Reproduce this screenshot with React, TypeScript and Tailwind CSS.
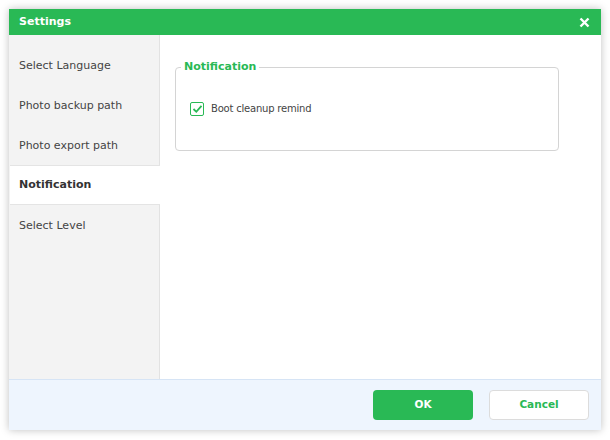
import React from "react";

const items = [
  "Select Language",
  "Photo backup path",
  "Photo export path",
  "Notification",
  "Select Level",
];

export default function App() {
  return (
    <div
      className="w-[610px] h-[440px] bg-white p-[9px] pr-[9px]"
      style={{ fontFamily: '"DejaVu Sans", Tahoma, sans-serif' }}
    >
      <div className="w-[592px] h-[421px] flex flex-col shadow-[0_0_8px_rgba(0,0,0,0.25)] bg-white">
        <div className="h-[26px] bg-[#29b955] flex items-center justify-between pl-[10px] pr-[11px]">
          <span className="text-white font-bold text-[11px]">Settings</span>
          <svg width="11" height="11" viewBox="0 0 11 11">
            <path d="M1.5 1.5 L9.5 9.5 M9.5 1.5 L1.5 9.5" stroke="white" strokeWidth="2.4" />
          </svg>
        </div>
        <div className="flex flex-1 min-h-0">
          <div className="w-[151px] bg-[#f3f3f3] border-r border-[#e2e2e2] pt-[10px] pl-[1px]">
            {items.map((t) => {
              const active = t === "Notification";
              return (
                <div
                  key={t}
                  className={
                    active
                      ? "h-[40px] flex items-center pl-[9px] pt-[1px] bg-white border-y border-[#e4e4e4] -mr-[1px] text-[11px] font-bold text-[#333]"
                      : "h-[40px] flex items-center pl-[9px] pt-[2px] text-[11px] text-[#444]"
                  }
                >
                  {t}
                </div>
              );
            })}
          </div>
          <div className="flex-1 pl-[15px] pt-[32px]">
            <div className="relative w-[384px] h-[84px] border border-[#d4d4d4] rounded-[4px]">
              <span className="absolute -top-[9px] left-[5px] bg-white px-[3px] text-[11px] font-bold text-[#29b955] leading-[16px]">
                Notification
              </span>
              <div className="flex items-center mt-[33px] ml-[14px] gap-[7px]">
                <div className="w-[14px] h-[14px] border border-[#29b955] rounded-[2px] bg-white flex items-center justify-center">
                  <svg width="11" height="10" viewBox="0 0 11 10">
                    <path d="M1.5 5 L4.3 7.8 L9.5 1.8" stroke="#29b955" strokeWidth="1.8" fill="none" />
                  </svg>
                </div>
                <span className="text-[10px] tracking-[-0.2px] text-[#444]">Boot cleanup remind</span>
              </div>
            </div>
          </div>
        </div>
        <div className="h-[51px] bg-[#eef5fe] border-t border-[#d6e4f5] flex items-center justify-end gap-[16px] pr-[12px]">
          <button className="w-[100px] h-[30px] rounded-[4px] bg-[#29b955] text-white text-[10.5px] font-bold">
            OK
          </button>
          <button className="w-[100px] h-[30px] rounded-[4px] bg-white border border-[#dcdcdc] text-[#29b955] text-[10.5px] font-bold">
            Cancel
          </button>
        </div>
      </div>
    </div>
  );
}
